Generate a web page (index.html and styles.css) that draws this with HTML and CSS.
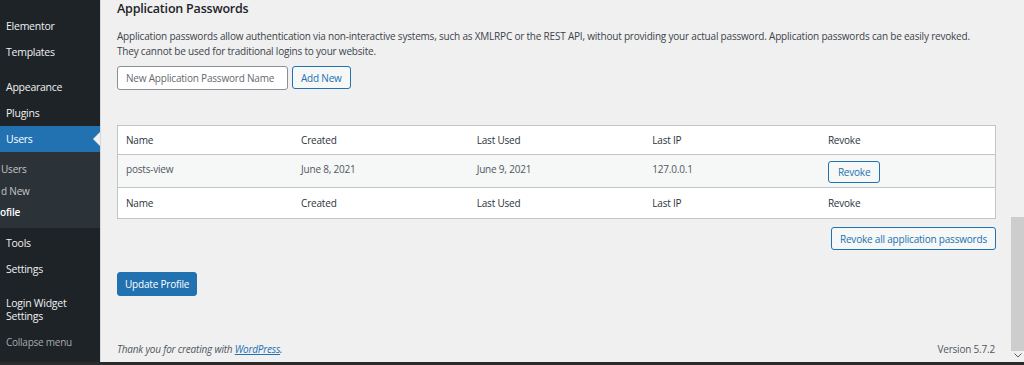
FILE: index.html
```html
<!DOCTYPE html>
<html>
<head>
  <title>Profile - Application Passwords</title>
  <link rel="stylesheet" href="styles.css">
</head>
<body>
  <div class="wrap">
    <div class="adminmenu">
      <ul class="menu">
        <li class="item">Elementor</li>
        <li class="item">Templates</li>
        <li class="sep"></li>
        <li class="item">Appearance</li>
        <li class="item">Plugins</li>
        <li class="item current">Users</li>
        <li class="submenu">
          <div class="sub">Users</div>
          <div class="sub">d New</div>
          <div class="sub active">ofile</div>
        </li>
        <li class="item after-sub">Tools</li>
        <li class="item">Settings</li>
        <li class="sep"></li>
        <li class="item two">Login Widget<br>Settings</li>
        <li class="item collapse">Collapse menu</li>
      </ul>
    </div>

    <div class="content">
      <h2>Application Passwords</h2>
      <p class="desc">Application passwords allow authentication via non-interactive systems, such as XMLRPC or the REST API, without providing your actual password. Application passwords can be easily revoked.<br>They cannot be used for traditional logins to your website.</p>

      <div class="create">
        <input type="text" placeholder="New Application Password Name">
        <button class="btn">Add New</button>
      </div>

      <table class="passwords">
        <thead>
          <tr><th>Name</th><th>Created</th><th>Last Used</th><th>Last IP</th><th>Revoke</th></tr>
        </thead>
        <tbody>
          <tr>
            <td>posts-view</td>
            <td>June 8, 2021</td>
            <td>June 9, 2021</td>
            <td>127.0.0.1</td>
            <td><button class="btn small">Revoke</button></td>
          </tr>
        </tbody>
        <tfoot>
          <tr><th>Name</th><th>Created</th><th>Last Used</th><th>Last IP</th><th>Revoke</th></tr>
        </tfoot>
      </table>

      <div class="revoke-all">
        <button class="btn">Revoke all application passwords</button>
      </div>

      <button class="btn primary">Update Profile</button>

      <div class="footer">
        <span class="thanks">Thank you for creating with <a href="#">WordPress</a>.</span>
        <span class="version">Version 5.7.2</span>
      </div>
    </div>

    <div class="scrollbar">
      <div class="thumb"></div>
      <svg class="arrow" width="8" height="5" viewBox="0 0 8 5"><path d="M0.5 0.5 L4 4 L7.5 0.5" fill="none" stroke="#606060" stroke-width="1"/></svg>
    </div>
  </div>
  <div class="taskbar"></div>
</body>
</html>
```

FILE: styles.css
```css
body {
  margin: 0;
  background: #f0f0f1;
  font-family: 'Open Sans', 'Noto Sans', Arial, sans-serif;
  font-size: 10px;
  letter-spacing: -0.2px;
  color: #3c434a;
  height: 365px;
  overflow: hidden;
}
.wrap {
  display: flex;
  height: 362px;
}
.adminmenu {
  width: 100px;
  flex: none;
  background: #1d2327;
  border-right: 1px solid #d8d8d8;
  overflow: hidden;
}
.menu {
  list-style: none;
  margin: 0;
  padding: 13px 0 0;
}
.item {
  height: 26px;
  line-height: 26px;
  padding-left: 6px;
  color: #f0f0f1;
  font-size: 10.5px;
  letter-spacing: -0.25px;
  white-space: nowrap;
}
.sep { height: 9px; }
.item.current {
  background: #2271b1;
  color: #fff;
  position: relative;
}
.item.current::after {
  content: '';
  position: absolute;
  right: 0;
  top: 6px;
  border: 7px solid transparent;
  border-right-color: #f0f0f1;
}
.submenu {
  background: #2c3338;
  padding: 7px 0 4px;
}
.sub {
  height: 21.5px;
  line-height: 21.5px;
  color: #c3c4c7;
  padding-left: 1px;
}
.sub.active {
  color: #fff;
  font-weight: 600;
  padding-left: 0;
}
.item.after-sub { margin-top: 2px; }
.item.two {
  height: auto;
  line-height: 13px;
  padding-top: 6px;
  padding-bottom: 6px;
}
.item.collapse {
  color: #a7aaad;
  font-size: 10px;
}
.content {
  flex: 1;
  padding: 0 14px 0 16px;
  display: flex;
  flex-direction: column;
  align-items: flex-start;
}
h2 {
  margin: 0;
  font-size: 12.5px;
  font-weight: 600;
  color: #1d2327;
  line-height: 18px;
}
.desc {
  margin: 11px 0 0;
  line-height: 15px;
}
.create {
  display: flex;
  gap: 4px;
  margin-top: 7px;
}
.create input {
  width: 171px;
  height: 24px;
  box-sizing: border-box;
  border: 1px solid #8c8f94;
  border-radius: 3px;
  padding: 0 8px;
  font-family: inherit;
  font-size: 10px;
  letter-spacing: -0.2px;
  background: #fff;
}
.create input::placeholder { color: #646970; }
.btn {
  height: 23px;
  padding: 0 8px;
  border: 1px solid #2271b1;
  border-radius: 3px;
  background: #f6f7f7;
  color: #2271b1;
  font-family: inherit;
  font-size: 10px;
  letter-spacing: -0.2px;
  cursor: pointer;
}
.btn.small { height: 22px; padding: 0 9px; }
.btn.primary {
  background: #2271b1;
  color: #fff;
  margin-top: 22px;
  height: 24px;
  padding: 0 7px;
}
.passwords {
  margin-top: 35px;
  width: 879px;
  border-collapse: collapse;
  border: 1px solid #c3c4c7;
  background: #fff;
  table-layout: fixed;
}
.passwords th, .passwords td {
  text-align: left;
  font-weight: normal;
  padding: 0 8px;
  color: #2c3338;
}
.passwords thead th { height: 28px; border-bottom: 1px solid #c3c4c7; }
.passwords tfoot th { height: 30px; border-top: 1px solid #c3c4c7; }
.passwords tbody tr { background: #f6f7f7; }
.passwords td { height: 25px; vertical-align: top; padding-top: 7px; color: #50575e; }
.passwords td:last-child { padding-top: 6px; }
.revoke-all {
  width: 879px;
  display: flex;
  justify-content: flex-end;
  margin-top: 8px;
}
.footer {
  margin-top: auto;
  width: 879px;
  display: flex;
  justify-content: space-between;
  padding-bottom: 6px;
  color: #50575e;
}
.thanks { font-style: italic; }
.thanks a { color: #2271b1; }
.version { padding-right: 1px; }
.scrollbar {
  width: 14px;
  flex: none;
  position: relative;
}
.thumb {
  position: absolute;
  top: 217px;
  left: 1px;
  right: 0;
  height: 134px;
  background: #cdcdcd;
}
.arrow {
  position: absolute;
  bottom: 4px;
  left: 4px;
}
.taskbar {
  height: 3px;
  background: #2b2b2b;
}
```
